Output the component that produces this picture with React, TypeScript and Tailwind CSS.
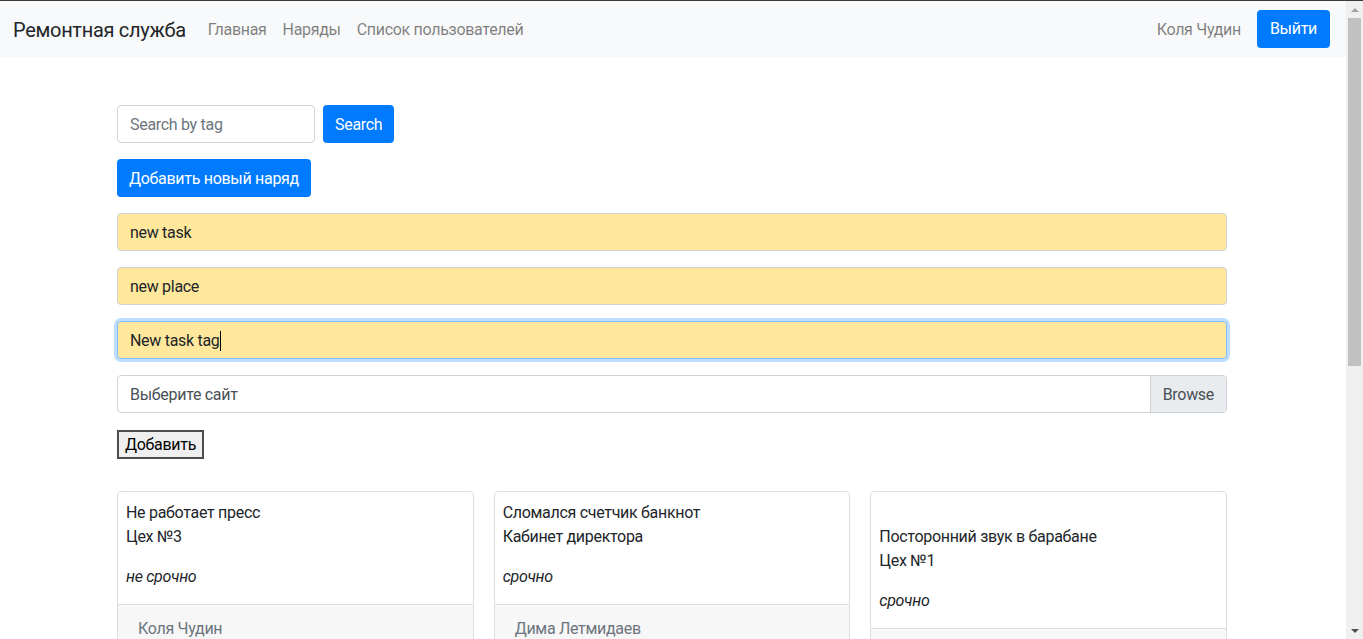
import React from 'react';

type Order = {
    id: number;
    title: string;
    place: string;
    urgent: boolean;
    worker: string;
    blankFirst?: boolean;
};

const orders: Order[] = [
    { id: 1, title: 'Не работает пресс', place: 'Цех №3', urgent: false, worker: 'Коля Чудин' },
    { id: 2, title: 'Сломался счетчик банкнот', place: 'Кабинет директора', urgent: true, worker: 'Дима Летмидаев' },
    { id: 3, title: 'Посторонний звук в барабане', place: 'Цех №1', urgent: true, worker: 'Коля Чудин', blankFirst: true },
];

const font = { fontFamily: '"Segoe UI", Roboto, "Noto Sans", sans-serif' };

const Navbar: React.FC = () => (
    <nav className="flex items-center justify-between h-14 bg-[#f8f9fa] pl-3 pr-4">
        <div className="flex items-center pt-[2px]">
            <span className="text-[20px] text-[#212529] mr-[14px] pl-px">Ремонтная служба</span>
            <a className="px-2 text-black/50">Главная</a>
            <a className="px-2 text-black/50">Наряды</a>
            <a className="px-2 text-black/50">Список пользователей</a>
        </div>
        <div className="flex items-center">
            <span className="px-2 pt-[2px] text-black/50">Коля Чудин</span>
            <button className="ml-2 h-[38px] px-[13px] rounded bg-[#007bff] text-white">Выйти</button>
        </div>
    </nav>
);

const YellowField: React.FC<{ value: string; focused?: boolean }> = ({ value, focused }) => (
    <div
        className={`h-[38px] flex items-center px-3 pt-px rounded bg-[#ffe89c] text-[#212529] border ${
            focused ? 'border-[#80bdff] shadow-[0_0_0_3px_rgba(0,123,255,0.25)]' : 'border-[#ced4da]'
        }`}
    >
        {value}
        {focused && <span className="inline-block w-px h-5 bg-black"></span>}
    </div>
);

const OrderCard: React.FC<{ order: Order }> = ({ order }) => (
    <div className="border border-[#dfdfdf] rounded bg-white overflow-hidden">
        <div className="px-2 pt-[9px] text-[#212529]">
            <p className="mb-4">
                {order.blankFirst && <br />}
                {order.title}
                <br />
                {order.place}
            </p>
            <p className="italic mb-[15px]">{order.urgent ? 'срочно' : 'не срочно'}</p>
        </div>
        <div className="border-t border-[#dfdfdf] bg-[#f7f7f7] px-5 py-3 text-[#6c757d]">{order.worker}</div>
    </div>
);

const Scrollbar: React.FC = () => (
    <div className="w-[17px] shrink-0 bg-[#f0f0f0] flex flex-col items-center">
        <div className="h-[17px] flex items-center justify-center">
            <div className="w-0 h-0 border-l-[4px] border-r-[4px] border-b-[4px] border-l-transparent border-r-transparent border-b-[#a3a3a3]"></div>
        </div>
        <div className="w-[13px] h-[348px] bg-[#c1c1c1]"></div>
        <div className="flex-1"></div>
        <div className="h-[17px] flex items-center justify-center">
            <div className="w-0 h-0 border-l-[4px] border-r-[4px] border-t-[4px] border-l-transparent border-r-transparent border-t-[#505050]"></div>
        </div>
    </div>
);

const App: React.FC = () => {
    return (
        <div className="h-[639px] flex flex-col overflow-hidden bg-white text-base leading-6 tracking-[-0.3px]" style={font}>
            <div className="h-px bg-[#3c3c3c] shrink-0"></div>
            <div className="flex flex-1 min-h-0">
                <div className="flex-1 min-w-0 overflow-hidden">
                    <Navbar />
                    <div className="w-[1110px] ml-[117px] pt-12">
                        <div className="flex gap-2">
                            <div className="w-[198px] h-[38px] flex items-center px-3 pt-px border border-[#ced4da] rounded text-[#6c757d]">Search by tag</div>
                            <button className="h-[38px] px-3 pt-px rounded bg-[#007bff] text-white">Search</button>
                        </div>
                        <button className="mt-4 h-[38px] px-3 pt-px rounded bg-[#007bff] text-white">Добавить новый наряд</button>

                        <div className="mt-4 flex flex-col gap-4">
                            <YellowField value="new task" />
                            <YellowField value="new place" />
                            <YellowField value="New task tag" focused />
                            <div className="h-[38px] flex border border-[#ced4da] rounded overflow-hidden text-[#495057]">
                                <div className="flex-1 flex items-center px-3 pt-px">Выберите сайт</div>
                                <div className="flex items-center px-3 pt-px bg-[#e9ecef] border-l border-[#ced4da]">Browse</div>
                            </div>
                        </div>

                        <button className="mt-[17px] h-[29px] px-[6px] border-2 border-[#4d4d4d] bg-[#efefef] text-black leading-none">Добавить</button>

                        <div className="mt-8 grid grid-cols-3 gap-[20px]">
                            {orders.map(o => (
                                <OrderCard key={o.id} order={o} />
                            ))}
                        </div>
                    </div>
                </div>
                <Scrollbar />
            </div>
        </div>
    );
};

export default App;
